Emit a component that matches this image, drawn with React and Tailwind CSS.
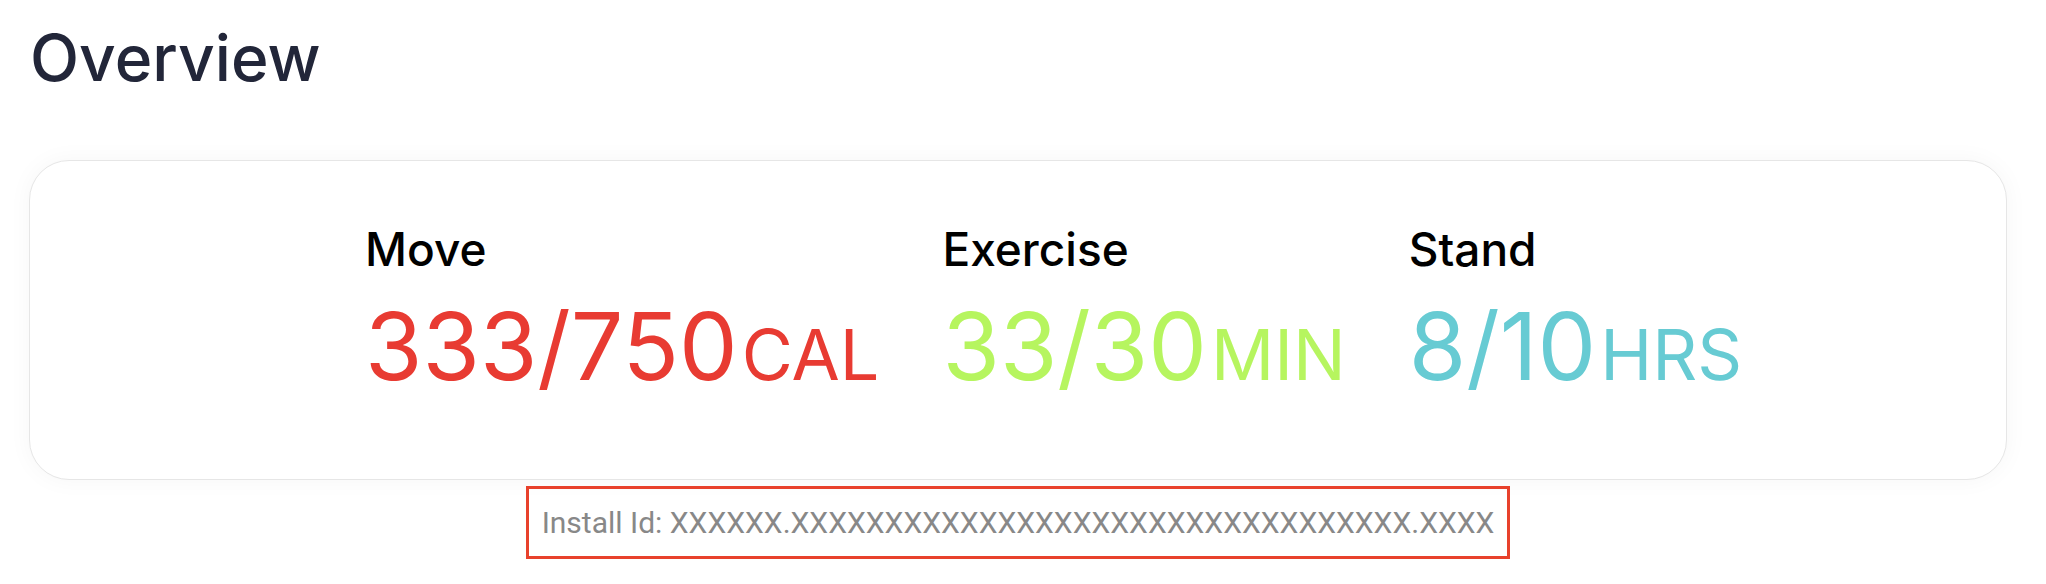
export default function App() {
  const stats = [
    { label: "Move", value: "333/750", unit: "CAL", color: "text-[#e83b32]" },
    { label: "Exercise", value: "33/30", unit: "MIN", color: "text-[#b6f55f]" },
    { label: "Stand", value: "8/10", unit: "HRS", color: "text-[#67cbd3]" },
  ];
  return (
    <div className="w-[2046px] h-[584px] bg-white pl-[29px] pr-[39px] pt-[26px] font-['Inter',sans-serif]">
      <h1 className="text-[64px] leading-none font-medium text-[#222639] pl-[1px]">Overview</h1>
      <div className="mt-[70px] h-[320px] rounded-[40px] border border-[#e6e6e6] bg-white shadow-[0_0_24px_rgba(0,0,0,0.04)] pt-[65px] pl-[335px] flex gap-[63px]">
        {stats.map((s) => (
          <div key={s.label} className="flex flex-col">
            <div className="text-[46px] leading-none font-medium text-black">{s.label}</div>
            <div className={`mt-[28px] flex items-baseline ${s.color}`}>
              <span className="text-[93px] leading-none">{s.value}</span>
              <span className="text-[70px] leading-none ml-[4px]">{s.unit}</span>
            </div>
          </div>
        ))}
      </div>
      <div className="mt-[6px] flex justify-center">
        <div className="h-[73px] border-[3px] border-[#e8412c] px-[13px] flex items-center text-[30px] text-[#888888] font-['Roboto',sans-serif]">
          Install Id: XXXXXX.XXXXXXXXXXXXXXXXXXXXXXXXXXXXXXXXX.XXXX
        </div>
      </div>
    </div>
  );
}
